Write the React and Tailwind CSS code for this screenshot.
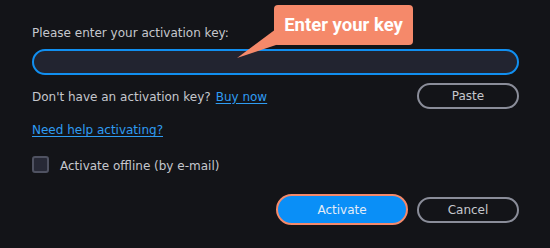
import React from "react";

export default function App() {
  return (
    <div className="relative w-[550px] h-[248px] overflow-hidden bg-[#131418] font-['DejaVu_Sans',sans-serif] text-[12px] leading-[14px] text-[#c5c7cd]">
      <div className="flex flex-col pl-[32px] pr-[31px] pt-[26px]">
        <div>Please enter your activation key:</div>
        <div className="mt-[9px] h-[26px] rounded-full border-2 border-[#118ff0] bg-[#222430]" />
        <div className="mt-[8px] flex h-[26px] items-center justify-between">
          <div className="flex items-center gap-[5px] pt-[1px]">
            <span>Don't have an activation key?</span>
            <span className="text-[#2f9cf2] underline underline-offset-2">Buy now</span>
          </div>
          <button className="flex h-[26px] w-[102px] items-center justify-center rounded-full border-2 border-[#8a8d99] text-[#c5c7cd]">
            Paste
          </button>
        </div>
        <div className="mt-[14px]">
          <span className="text-[#2f9cf2] underline underline-offset-2">Need help activating?</span>
        </div>
        <div className="mt-[19px] flex items-center gap-[11px]">
          <div className="h-[17px] w-[17px] rounded-[3px] border-2 border-[#4f5261] bg-[#272936]" />
          <span className="pt-[2px]">Activate offline (by e-mail)</span>
        </div>
        <div className="mt-[21px] flex items-center justify-end gap-[9px]">
          <button className="flex h-[31px] w-[132px] items-center justify-center rounded-full border-2 border-[#f4896a] bg-[#0a8ff7] text-[#e4ecf6]">
            Activate
          </button>
          <button className="flex h-[26px] w-[102px] items-center justify-center rounded-full border-2 border-[#8a8d99] text-[#c5c7cd]">
            Cancel
          </button>
        </div>
      </div>

      <svg className="absolute left-0 top-0" width="550" height="248" viewBox="0 0 550 248">
        <polygon points="276,29 237,58 282,43" fill="#f5896a" />
      </svg>
      <div className="absolute left-[274px] top-[5px] flex h-[40px] w-[139px] items-center justify-center rounded-[4px] bg-[#f5896a] pb-[1px] font-['Roboto',sans-serif] text-[18.5px] font-bold leading-[22px] text-white">
        Enter your key
      </div>
    </div>
  );
}
